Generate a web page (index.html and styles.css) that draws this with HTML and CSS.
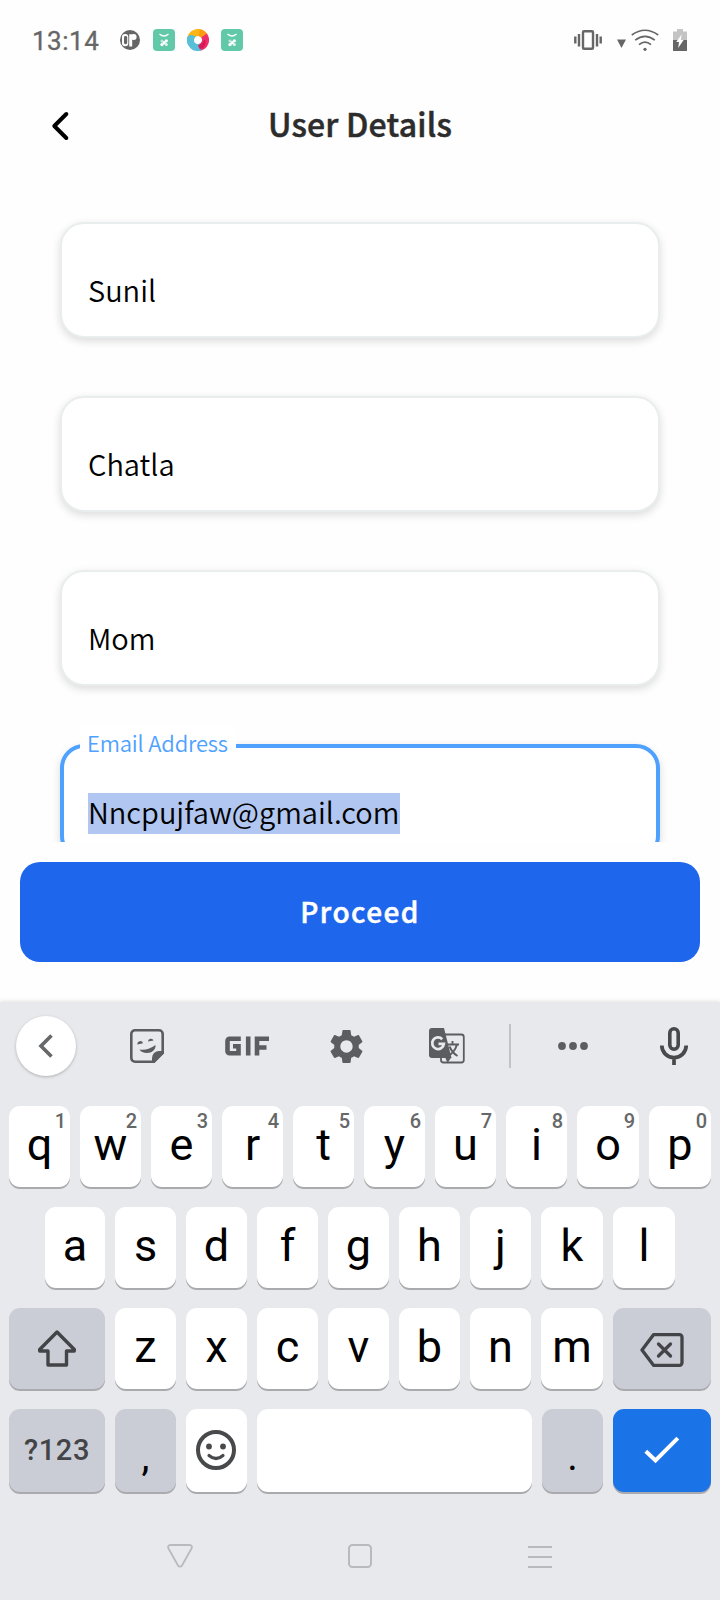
FILE: index.html
```html
<!DOCTYPE html>
<html lang="en">
<head>
<meta charset="utf-8">
<title>User Details</title>
<link rel="stylesheet" href="styles.css">
</head>
<body>
<div class="screen">
  <div class="status">
    <span class="clock">13:14</span>
    <svg class="notif" width="20" height="20" viewBox="0 0 20 20"><circle cx="10" cy="10" r="10" fill="#666"/><rect x="2" y="4" width="6.300" height="12.200" rx="3" fill="#fff"/><rect x="4" y="6" width="3.200" height="8.200" rx="1.400" fill="#666"/><path d="M9.200 4.300h3v12.200h-3z" fill="#fff"/><circle cx="13.600" cy="7" r="3" fill="#fff"/></svg>
    <svg class="app" width="22" height="22" viewBox="0 0 22 22"><rect width="22" height="22" rx="4" fill="#62c9a8"/><path d="M6.500 5Q11 9 15.500 5" fill="none" stroke="#fff" stroke-width="1.300"/><g fill="#fff"><circle cx="9" cy="12" r="1.500" opacity=".6"/><circle cx="13.300" cy="11.800" r="1.600"/><circle cx="9" cy="15.600" r="1.700"/><circle cx="13.300" cy="15.500" r="1.500" opacity=".8"/><circle cx="11.200" cy="13.700" r="1.600"/></g></svg>
    <svg class="app" width="22" height="22" viewBox="0 0 22 22"><g fill="none" stroke-width="7"><path d="M3.600 9.700A7.500 7.500 0 0 1 15.800 5.300" stroke="#fdb515"/><path d="M12.300 3.600A7.500 7.500 0 0 1 17.500 7.200" stroke="#fc9a10"/><path d="M17 6.500A7.500 7.500 0 0 1 12.300 18.400" stroke="#ee2f6a"/><path d="M13.500 18A7.500 7.500 0 0 1 3.600 9" stroke="#57bfd8"/></g><path d="M18 10c2 5 0 9-5 10.500l-2-4c3-1 5-3 7-6.500z" fill="#d8195a"/><path d="M0 8c3-3 5-2.500 9-.5-2 1-2.500 3-2 5C4 11.500 2 10 0 8z" fill="#57bfd8"/></svg>
    <svg class="app" width="22" height="22" viewBox="0 0 22 22"><rect width="22" height="22" rx="4" fill="#62c9a8"/><path d="M6.500 5Q11 9 15.500 5" fill="none" stroke="#fff" stroke-width="1.300"/><g fill="#fff"><circle cx="9" cy="12" r="1.500" opacity=".6"/><circle cx="13.300" cy="11.800" r="1.600"/><circle cx="9" cy="15.600" r="1.700"/><circle cx="13.300" cy="15.500" r="1.500" opacity=".8"/><circle cx="11.200" cy="13.700" r="1.600"/></g></svg>
    <span class="spacer"></span>
    <svg class="vibrate" width="28" height="20" viewBox="0 0 28 20"><rect x="9" y="1.200" width="10" height="17.600" rx="1" fill="none" stroke="#666" stroke-width="2.400"/><path d="M1.300 6.500v7M5 4v12.500M23 4v12.500M26.700 6.500v7" stroke="#666" stroke-width="2.400"/></svg>
    <svg class="signal" width="9" height="22" viewBox="0 0 9 22"><path d="M0 10.500h9L4.500 19z" fill="#666"/></svg>
    <svg class="wifi" width="28" height="22" viewBox="0 0 28 22"><g fill="none" stroke="#666" stroke-width="1.700"><path d="M.8 6Q14-3.500 27.200 6"/><path d="M4.200 11.200Q14 3.600 23.800 11.200"/><path d="M8 15.600Q14 10.700 20 15.600"/></g><circle cx="14" cy="20.300" r="1.600" fill="#666"/></svg>
    <svg class="battery" width="14" height="22" viewBox="0 0 14 22"><path d="M0 2.500h4V0h6v2.500h4V11H0z" fill="#c4c4c4"/><path d="M0 11h14v11H0z" fill="#666"/><path d="M8.600 5.500L3.200 13H6l-.8 6L10.600 11H7.800z" fill="#fff"/></svg>
  </div>

  <header class="header">
    <svg class="back" width="20" height="32" viewBox="0 0 20 32"><path d="M16.300 4L4.300 16l12 12" fill="none" stroke="#000" stroke-width="4" stroke-linecap="round" stroke-linejoin="round"/></svg>
    <h1 class="title">User Details</h1>
  </header>

  <main class="form">
    <div class="field"><span class="value">Sunil</span></div>
    <div class="field"><span class="value">Chatla</span></div>
    <div class="field"><span class="value">Mom</span></div>
    <div class="field active"><span class="label">Email Address</span><span class="value selected">Nncpujfaw@gmail.com</span></div>
  </main>

  <div class="footer"><div class="proceed">Proceed</div></div>

  <section class="keyboard">
    <div class="toolbar">
      <div class="collapse"><svg width="60" height="60" viewBox="0 0 60 60"><path d="M35.500 19.500L25 30l10.500 10.500" fill="none" stroke="#666769" stroke-width="3.600"/></svg></div>
      <svg class="sticker" width="34" height="34" viewBox="0 0 34 34"><path d="M5 1.300h24a3.700 3.700 0 0 1 3.700 3.700v18.500l-9.200 9.200H5A3.700 3.700 0 0 1 1.300 29V5A3.700 3.700 0 0 1 5 1.300z" fill="none" stroke="#5c5d60" stroke-width="2.600"/><path d="M34 22v2.500L24.500 34H22v-5a7 7 0 0 1 7-7z" fill="#5c5d60"/><path d="M7.500 15.500a2.800 2.800 0 0 1 5.500-1.200zM18 12.600a2.900 2.900 0 0 1 5.600-1.100zM9.500 20.500c6 .8 11-.8 16-4.500.500 4.500-3.500 8-8.500 8-3.500 0-6.500-1.500-7.500-3.500z" fill="#5c5d60"/></svg>
      <svg class="gif" width="44" height="20" viewBox="0 0 44 20"><path d="M15.800 2.700H4.500a2 2 0 0 0-2 2v10.600a2 2 0 0 0 2 2h9v-7.100H8M23.200 .4v19.200M32 19.600V2.700h12M32 11.500h9.500" fill="none" stroke="#5c5d60" stroke-width="4.600"/></svg>
      <svg class="gear" width="41" height="41" viewBox="0 0 24 24"><path fill="#5c5d60" d="M19.140 12.940c.04-.3.06-.61.06-.94 0-.32-.02-.64-.07-.94l2.030-1.580c.18-.14.230-.41.120-.61l-1.920-3.320c-.12-.22-.37-.29-.59-.22l-2.390.96c-.5-.38-1.030-.7-1.620-.94L14.400 2.810c-.04-.24-.24-.41-.48-.41h-3.840c-.24 0-.43.170-.47.410l-.36 2.540c-.59.240-1.130.570-1.620.94l-2.390-.96c-.22-.08-.47 0-.59.220L2.740 8.870c-.12.210-.08.470.120.610l2.030 1.580c-.05.3-.09.630-.09.940s.02.640.07.940l-2.030 1.580c-.18.140-.23.410-.12.610l1.920 3.320c.12.220.370.290.590.220l2.390-.96c.5.380 1.030.7 1.620.94l.36 2.540c.05.240.240.410.480.410h3.840c.24 0 .44-.17.470-.41l.36-2.540c.59-.24 1.130-.56 1.620-.94l2.390.96c.22.080.470 0 .59-.22l1.920-3.320c.12-.22.070-.47-.12-.61l-2.010-1.580zM12 15.600c-1.980 0-3.600-1.620-3.600-3.600s1.620-3.600 3.600-3.600 3.600 1.620 3.600 3.600-1.620 3.600-3.600 3.600z"/></svg>
      <svg class="translate" width="36" height="36" viewBox="0 0 36 36"><rect x="12" y="6.500" width="22.800" height="28" rx="2.500" fill="none" stroke="#5c5d60" stroke-width="1.800"/><path d="M3 0h12l7.500 30H3a3 3 0 0 1-3-3V3a3 3 0 0 1 3-3z" fill="#5c5d60"/><path d="M16 29h6.500L18.500 35z" fill="#5c5d60"/><path d="M13.200 11.200A5.800 5.800 0 1 0 14.800 15.800H9.500" fill="none" stroke="#e8e9ed" stroke-width="2.800"/><path d="M18 16.500h12M23.500 13v3.500M28 16.500c-1.500 5-4.500 9-9 11.500M20.500 18.500c2 4.500 4.500 7.500 8 9.500" fill="none" stroke="#5c5d60" stroke-width="1.900"/></svg>
      <span class="divider"></span>
      <svg class="dots" width="30" height="8" viewBox="0 0 30 8" fill="#5c5d60"><circle cx="4" cy="4" r="3.900"/><circle cx="15" cy="4" r="3.900"/><circle cx="26" cy="4" r="3.900"/></svg>
      <svg class="mic" width="28" height="38" viewBox="0 0 28 38"><g fill="none" stroke="#48494b"><rect x="9.800" y="1.800" width="8.400" height="20.400" rx="4.200" stroke-width="3.600"/><path d="M1.800 18.500a12.200 12.200 0 0 0 24.400 0M14 30v8" stroke-width="3.700"/></g></svg>
    </div>

    <div class="row row1">
      <div class="key">q<span class="hint">1</span></div><div class="key">w<span class="hint">2</span></div><div class="key">e<span class="hint">3</span></div><div class="key">r<span class="hint">4</span></div><div class="key">t<span class="hint">5</span></div><div class="key">y<span class="hint">6</span></div><div class="key">u<span class="hint">7</span></div><div class="key">i<span class="hint">8</span></div><div class="key">o<span class="hint">9</span></div><div class="key">p<span class="hint">0</span></div>
    </div>
    <div class="row row2">
      <div class="key">a</div><div class="key">s</div><div class="key">d</div><div class="key">f</div><div class="key">g</div><div class="key">h</div><div class="key">j</div><div class="key">k</div><div class="key">l</div>
    </div>
    <div class="row row3">
      <div class="key mod shift"><svg width="40" height="38" viewBox="0 0 40 38"><path d="M20 3L37.300 20.500v1.500H29.500v14H11V22H2.700v-1.500z" fill="none" stroke="#434447" stroke-width="3.400" stroke-linejoin="round"/></svg></div>
      <div class="key">z</div><div class="key">x</div><div class="key">c</div><div class="key">v</div><div class="key">b</div><div class="key">n</div><div class="key">m</div>
      <div class="key mod erase"><svg width="44" height="34" viewBox="0 0 44 34"><g fill="none" stroke="#434447" stroke-width="3.300" stroke-linecap="round" stroke-linejoin="round"><path d="M13.500 1.700h26a2.500 2.500 0 0 1 2.500 2.500v25.600a2.500 2.500 0 0 1-2.500 2.500h-26L2 17z"/><path d="M18.500 11l12 12M30.500 11L18.500 23"/></g></svg></div>
    </div>
    <div class="row row4">
      <div class="key mod sym">?123</div>
      <div class="key mod punct">,</div>
      <div class="key"><svg class="smile" width="40" height="40" viewBox="0 0 40 40"><circle cx="20" cy="20" r="18" fill="none" stroke="#48494b" stroke-width="4"/><circle cx="13" cy="16.500" r="2.900" fill="#48494b"/><circle cx="27" cy="16.500" r="2.900" fill="#48494b"/><path d="M13 25.500q7 6 14 0" fill="none" stroke="#48494b" stroke-width="3.200" stroke-linecap="round"/></svg></div>
      <div class="key"></div>
      <div class="key mod punct">.</div>
      <div class="key enter"><svg width="36" height="28" viewBox="0 0 36 28"><path d="M1.800 15.200L11.500 24.500 33.800 2.200" fill="none" stroke="#fff" stroke-width="4"/></svg></div>
    </div>

    <nav class="nav">
      <svg width="26" height="24" viewBox="0 0 26 24"><path d="M3.500 1h19a2.300 2.300 0 0 1 2 3.600L15 21.500a2.300 2.300 0 0 1-4 0L1.500 4.600A2.300 2.300 0 0 1 3.500 1z" fill="none" stroke="#b9babd" stroke-width="1.800"/></svg>
      <svg width="24" height="24" viewBox="0 0 24 24"><rect x="1" y="1" width="22" height="22" rx="3.500" fill="none" stroke="#b9babd" stroke-width="2"/></svg>
      <svg class="recents" width="24" height="24" viewBox="0 0 24 24"><path d="M0 3h24M0 13h24M0 23h24" stroke="#b9babd" stroke-width="2"/></svg>
    </nav>
  </section>
</div>
</body>
</html>
```

FILE: styles.css
```css
* { box-sizing: border-box; }
body { margin: 0; background: #fefefe; }
svg { display: block; flex: none; }

.screen {
  width: 720px;
  height: 1600px;
  overflow: hidden;
  display: flex;
  flex-direction: column;
  background: #fefefe;
  font-family: "Noto Sans CJK SC", "Noto Sans", sans-serif;
}

/* status bar */
.status {
  height: 80px;
  flex: none;
  display: flex;
  align-items: center;
  padding: 0 33px 0 32px;
}
.clock {
  width: 88px;
  font: 400 26px/30px Roboto, sans-serif;
  letter-spacing: 0.5px;
  color: #666;
  -webkit-text-stroke: 0.3px #666;
  padding-top: 2px;
}
.app { margin-left: 12px; }
.notif + .app { margin-left: 13px; }
.spacer { flex: 1; }
.signal { margin-left: 15px; }
.wifi { margin-left: 5px; }
.battery { margin-left: 14px; }

/* header */
.header {
  height: 92px;
  flex: none;
  display: grid;
  grid-template-columns: 100px 1fr 100px;
  align-items: start;
  padding-top: 22px;
}
.back { margin: 8px 0 0 50px; }
.title {
  margin: 0;
  font-size: 32px;
  font-weight: 500;
  line-height: 42px;
  letter-spacing: 0.2px;
  text-align: center;
  color: #2c2c2c;
  -webkit-text-stroke: 0.5px #2c2c2c;
}

/* form */
.form {
  height: 670px;
  flex: none;
  overflow: hidden;
  padding: 50px 60px 0;
  display: flex;
  flex-direction: column;
  gap: 58px;
}
.field {
  position: relative;
  flex: none;
  height: 116px;
  border: 2px solid #e9eded;
  border-radius: 24px;
  background: #fff;
  box-shadow: 0 3px 8px rgba(0, 0, 0, 0.14);
  padding: 47px 0 0 26px;
}
.value {
  display: inline-block;
  height: 41px;
  font-size: 29px;
  font-weight: 350;
  line-height: 37px;
  color: #000;
}
.active {
  border: 4px solid #4ea1ff;
  padding: 45px 0 0 24px;
}
.selected { background: #b1c7f1; }
.label {
  position: absolute;
  left: 16px;
  top: -22px;
  width: 156px;
  padding-left: 7px;
  font-size: 22px;
  font-weight: 350;
  line-height: 32px;
  letter-spacing: -0.18px;
  color: #4ea1ff;
  background: #fff;
}

.footer { flex: none; height: 160px; padding: 20px 20px 0; }
.proceed {
  height: 100px;
  border-radius: 20px;
  background: #1e66ec;
  color: #fff;
  font-size: 28px;
  font-weight: 500;
  line-height: 98px;
  letter-spacing: 1.4px;
  text-align: center;
  -webkit-text-stroke: 0.5px #fff;
}

/* keyboard */
.keyboard {
  flex: 1;
  background: #e8e9ed;
  box-shadow: 0 0 5px rgba(0, 0, 0, 0.15);
  font-family: Roboto, sans-serif;
}
.toolbar {
  height: 104px;
  display: flex;
  align-items: center;
  padding: 0 32px 16px 16px;
}
.collapse {
  width: 60px;
  height: 60px;
  border-radius: 50%;
  background: #fff;
  box-shadow: 0 1px 3px rgba(0, 0, 0, 0.25);
}
.sticker { margin-left: 54px; }
.gif { margin-left: 61px; }
.gear { margin-left: 57px; }
.translate { margin-left: 62px; }
.divider { width: 2px; height: 44px; margin-left: 44px; background: #c2c3c7; }
.dots { margin-left: 47px; }
.mic { margin-left: 72px; }

.row { display: grid; gap: 10px; height: 81px; margin-bottom: 20px; padding-left: 9px; }
.row1 { grid-template-columns: repeat(8, 61px) 62px 62px; }
.row2 { grid-template-columns: 60px repeat(6, 61px) 62px 62px; padding-left: 45px; }
.row3 { grid-template-columns: 96px repeat(6, 61px) 62px 98px; }
.row4 { grid-template-columns: 96px 61px 61px 275px 61px 98px; height: 83px; margin: 0; }
.key {
  position: relative;
  display: flex;
  justify-content: center;
  align-items: center;
  padding-bottom: 4px;
  border-radius: 11px;
  background: #fff;
  box-shadow: 0 2px 0 #a9aaad;
  font-size: 45px;
  line-height: 52px;
  color: #000;
}
.key svg { margin-top: 3px; }
.key.erase svg { margin-top: 7px; }
.key .smile { margin-right: 1px; }
.hint {
  position: absolute;
  right: 4px;
  top: 3px;
  font-size: 20px;
  font-weight: 500;
  line-height: 24px;
  color: #666769;
}
.mod { background: #cbcdd6; }
.sym { font-size: 29px; font-weight: 500; color: #434447; letter-spacing: 0.6px; padding-bottom: 1px; }
.punct { font-size: 40px; padding: 12px 0 0; }
.enter { background: #1b73e8; }

.nav {
  height: 108px;
  display: flex;
  align-items: center;
  gap: 155px;
  padding: 20px 0 0 167px;
}
.recents { margin-left: 1px; }
```
